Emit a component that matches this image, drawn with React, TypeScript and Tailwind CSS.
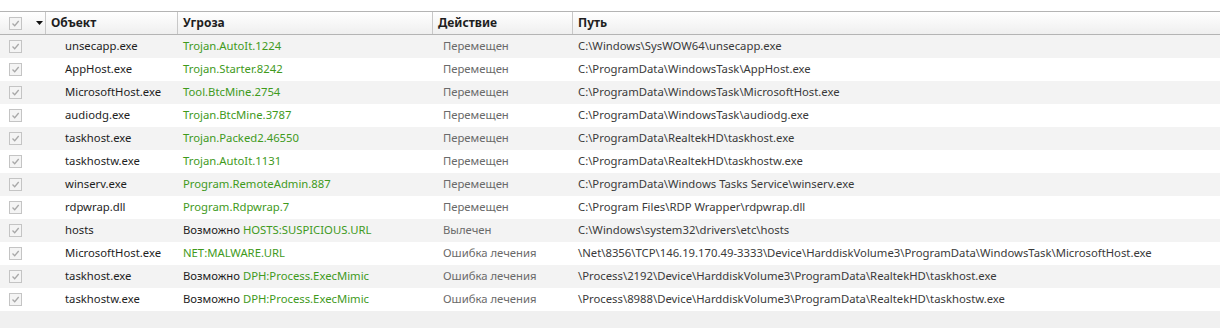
const rows = [
  { obj: 'unsecapp.exe', pre: '', threat: 'Trojan.AutoIt.1224', action: 'Перемещен', path: 'C:\\Windows\\SysWOW64\\unsecapp.exe' },
  { obj: 'AppHost.exe', pre: '', threat: 'Trojan.Starter.8242', action: 'Перемещен', path: 'C:\\ProgramData\\WindowsTask\\AppHost.exe' },
  { obj: 'MicrosoftHost.exe', pre: '', threat: 'Tool.BtcMine.2754', action: 'Перемещен', path: 'C:\\ProgramData\\WindowsTask\\MicrosoftHost.exe' },
  { obj: 'audiodg.exe', pre: '', threat: 'Trojan.BtcMine.3787', action: 'Перемещен', path: 'C:\\ProgramData\\WindowsTask\\audiodg.exe' },
  { obj: 'taskhost.exe', pre: '', threat: 'Trojan.Packed2.46550', action: 'Перемещен', path: 'C:\\ProgramData\\RealtekHD\\taskhost.exe' },
  { obj: 'taskhostw.exe', pre: '', threat: 'Trojan.AutoIt.1131', action: 'Перемещен', path: 'C:\\ProgramData\\RealtekHD\\taskhostw.exe' },
  { obj: 'winserv.exe', pre: '', threat: 'Program.RemoteAdmin.887', action: 'Перемещен', path: 'C:\\ProgramData\\Windows Tasks Service\\winserv.exe' },
  { obj: 'rdpwrap.dll', pre: '', threat: 'Program.Rdpwrap.7', action: 'Перемещен', path: 'C:\\Program Files\\RDP Wrapper\\rdpwrap.dll' },
  { obj: 'hosts', pre: 'Возможно ', threat: 'HOSTS:SUSPICIOUS.URL', action: 'Вылечен', path: 'C:\\Windows\\system32\\drivers\\etc\\hosts' },
  { obj: 'MicrosoftHost.exe', pre: '', threat: 'NET:MALWARE.URL', action: 'Ошибка лечения', path: '\\Net\\8356\\TCP\\146.19.170.49-3333\\Device\\HarddiskVolume3\\ProgramData\\WindowsTask\\MicrosoftHost.exe' },
  { obj: 'taskhost.exe', pre: 'Возможно ', threat: 'DPH:Process.ExecMimic', action: 'Ошибка лечения', path: '\\Process\\2192\\Device\\HarddiskVolume3\\ProgramData\\RealtekHD\\taskhost.exe' },
  { obj: 'taskhostw.exe', pre: 'Возможно ', threat: 'DPH:Process.ExecMimic', action: 'Ошибка лечения', path: '\\Process\\8988\\Device\\HarddiskVolume3\\ProgramData\\RealtekHD\\taskhostw.exe' },
]

function Check() {
  return (
    <span className='flex h-[13px] w-[13px] items-center justify-center border border-[#c4c4c4] bg-[#f4f4f4]'>
      <svg width='9' height='9' viewBox='0 0 9 9'>
        <path d='M1.5 4.5 L3.7 6.7 L7.7 2' fill='none' stroke='#a8a8a8' strokeWidth='1.3' />
      </svg>
    </span>
  )
}

const cols = 'grid grid-cols-[45px_132px_255px_140px_1fr]'

export default function App() {
  return (
    <div className='h-[328px] w-[1220px] overflow-hidden bg-[#f0f0f0] text-[11.3px] font-["Noto_Sans","Open_Sans",sans-serif]'>
      <div className='h-[11px] bg-white' />
      <div className={`${cols} h-[24px] border-y border-[#b4b4b4] bg-gradient-to-b from-white to-[#efefef] text-[12px] font-bold text-[#1e1e1e]`}>
        <div className='flex items-center gap-[14px] pl-[9px]'>
          <Check />
          <svg width='7' height='4' viewBox='0 0 7 4'><path d='M0 0 H7 L3.5 4 Z' fill='#111' /></svg>
        </div>
        <div className='flex items-center border-l border-[#c8c8c8] pl-[5px]'>Объект</div>
        <div className='flex items-center border-l border-[#c8c8c8] pl-[5px]'>Угроза</div>
        <div className='flex items-center border-l border-[#c8c8c8] pl-[5px]'>Действие</div>
        <div className='flex items-center border-l border-[#c8c8c8] pl-[5px]'>Путь</div>
      </div>
      {rows.map((r, i) => (
        <div key={i} className={`${cols} h-[23px] items-center ${i % 2 === 0 ? 'bg-[#f3f3f3]' : 'bg-white'}`}>
          <div className='pl-[9px]'><Check /></div>
          <div className='pl-[20px] text-[#1e1e1e]'>{r.obj}</div>
          <div className='pl-[6px] text-[#1e1e1e]'>{r.pre}<span className='text-[#3f9a1c]'>{r.threat}</span></div>
          <div className='pl-[11px] text-[#6a6a6a]'>{r.action}</div>
          <div className='pl-[6px] whitespace-nowrap text-[#3a3a3a]'>{r.path}</div>
        </div>
      ))}
    </div>
  )
}
